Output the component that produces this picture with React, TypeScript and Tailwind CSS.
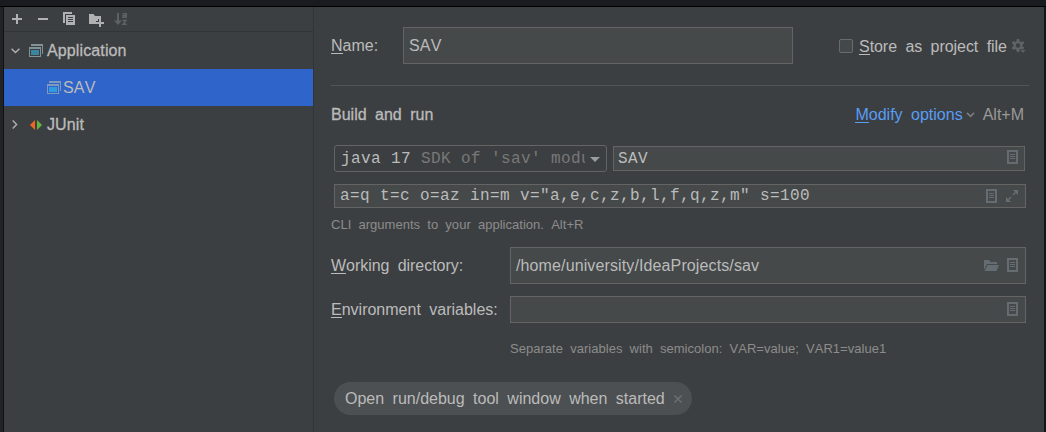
import React from "react";

const PageIcon = ({ className = "" }: { className?: string }) => (
  <svg className={`shrink-0 ${className}`} width="11" height="14" viewBox="0 0 11 14" shapeRendering="crispEdges">
    <path d="M0 0h11v14H0zM2 2v10h7V2z" fill="#656d73" fillRule="evenodd" />
    <path d="M3 4h5v1H3zM3 6h5v1H3zM3 8h5v1H3z" fill="#656d73" />
  </svg>
);

const AppIcon = ({ fill, frame, className = "" }: { fill: string; frame: string; className?: string }) => (
  <svg className={`shrink-0 ${className}`} width="14" height="13" viewBox="0 0 14 13" shapeRendering="crispEdges">
    <path d="M2 0h12v10h-1V2H2z" fill={frame} />
    <path d="M0 3h12v10H0zM1 5v7h10V5z" fill={frame} fillRule="evenodd" />
    <path d="M2 6h8v5H2z" fill={fill} />
  </svg>
);

const Label = ({ text, className = "" }: { text: string; className?: string }) => (
  <span className={`whitespace-nowrap ${className}`}>
    <span className="relative">
      {text[0]}
      <span className="absolute inset-x-0 bottom-0 h-px bg-current" />
    </span>
    {text.slice(1)}
  </span>
);

function Sidebar() {
  return (
    <aside className="flex w-[310px] shrink-0 flex-col border-r border-[#323537]">
      <div className="flex h-[25px] shrink-0 items-start border-b border-[#323537] pl-2 pt-[5px]">
        <svg width="120" height="15" viewBox="0 0 120 15">
          <path d="M4 2h2v4h4v2H6v4H4V8H0V6h4zM26 6h10v2H26z" fill="#afb1b3" />
          <path d="M51 0h9v2h-7v9h-2z" fill="#afb1b3" />
          <path d="M54 3h9v10h-9zM56 5v1h5V5zM56 7v1h5V7zM56 9v1h5V9z" fill="#afb1b3" fillRule="evenodd" />
          <path d="M77 2h4.500l1.500 2h6v3h-3v2h-2v3h-7z" fill="#afb1b3" />
          <path d="M87 7h2v3h3v2h-3v3h-2v-3h-3v-2h3z" fill="#afb1b3" />
          <path d="M105 1h2v7.500h3L106 13l-4-4.500h3z" fill="#5f6264" />
          <path d="M110.500 1.700h3.800v4.300M114 5.300h-3V3.600h3M110.500 8.500h3.500L110.900 12.300h3.900" stroke="#5f6264" strokeWidth="1.400" fill="none" />
        </svg>
      </div>
      <div className="flex h-[37px] items-center pl-[7px]">
        <svg width="9" height="6" viewBox="0 0 9 6" fill="none" stroke="#afb1b3" strokeWidth="1.400"><path d="M.6.7 4.500 4.600 8.400.7" /></svg>
        <AppIcon frame="#839199" fill="#3a859f" className="-mt-px ml-[9px]" />
        <span className="ml-1 tracking-[0.120px] [-webkit-text-stroke:0.3px_#bbbbbb]">Application</span>
      </div>
      <div className="flex h-[37px] items-center bg-[#2f65ca] pl-[43px]">
        <AppIcon frame="#8199bb" fill="#329bdb" className="-mt-px" />
        <span className="ml-[2px] tracking-[0.200px]">SAV</span>
      </div>
      <div className="flex h-[37px] items-center pl-[8px]">
        <svg width="6" height="9" viewBox="0 0 6 9" fill="none" stroke="#afb1b3" strokeWidth="1.400"><path d="M.7.6 4.600 4.500.7 8.400" /></svg>
        <svg className="ml-[12px]" width="12" height="10" viewBox="0 0 12 10"><path d="M5 0v10L0 5z" fill="#f26522" /><path d="M7 0v10l5-5z" fill="#62b543" /></svg>
        <span className="ml-[5px] tracking-[0.100px] [-webkit-text-stroke:0.3px_#bbbbbb]">JUnit</span>
      </div>
    </aside>
  );
}

export default function App() {
  return (
    <div className="flex h-[432px] w-[1046px] flex-col overflow-hidden bg-[#1a1b20] font-['Liberation_Sans',sans-serif] text-[16px] leading-[18px] text-[#bbbbbb] [font-kerning:none] [word-spacing:4px]">
      <div className="h-[7px] shrink-0 border-b border-black" />
      <div className="flex min-h-0 flex-1 border-l-[3px] border-[#222325]">
        <div className="flex flex-1 border-l border-r-2 border-l-[#0f1011] border-r-[#141516] bg-[#3c3f41]">
          <Sidebar />
          <main className="flex w-[716px] shrink-0 flex-col pl-[17px]">
            <div className="mt-5 flex h-[37px] items-center">
              <Label text="Name:" className="w-[72px]" />
              <div className="flex h-[37px] w-[390px] items-center border border-[#646464] bg-[#45494a] pl-[5px] tracking-[0.200px]">SAV</div>
              <span className="ml-[46px] size-[14px] rounded-[2px] border border-[#6b6b6b] bg-[#43494a]" />
              <Label text="Store as project file" className="ml-[6px] mt-[2px] tracking-[-0.050px]" />
              <svg className="ml-[5px] mt-px" width="14" height="14" viewBox="0 0 14 14">
                <circle cx="6" cy="6.500" r="3.400" fill="none" stroke="#606365" strokeWidth="2.400" />
                <path d="M6 0v3M6 10v3M.4 3.300 3 4.800M9 8.200l2.600 1.500M.4 9.700 3 8.200M9 4.800l2.600-1.500" stroke="#606365" strokeWidth="2.800" />
                <path d="M8 11H14L11 14z" fill="#606365" stroke="#3c3f41" strokeWidth=".4" />
              </svg>
            </div>
            <div className="mt-[21px] h-px w-[698px] bg-[#515557]" />
            <div className="mt-[19px] flex h-[19px] w-[693px] items-center">
              <span className="[-webkit-text-stroke:0.3px_#bbbbbb]">Build and run</span>
              <Label text="Modify options" className="ml-auto text-[#589df6]" />
              <svg className="ml-[3px]" width="9" height="6" viewBox="0 0 9 6" fill="none" stroke="#787b7d" strokeWidth="1.700"><path d="m1 .8 3.500 3.500L8 .8" /></svg>
              <span className="ml-[8px] text-[#999999]">Alt+M</span>
            </div>
            <div className="ml-[3px] mt-[21px] flex h-[27px] items-center font-['Liberation_Mono',monospace] text-[16px] tracking-[0.400px] [word-spacing:0px]">
              <div className="flex h-[27px] w-[273px] items-center rounded-[3px] border border-[#646464] pl-[6px]">
                <span className="w-[244px] overflow-hidden whitespace-pre">java 17 <span className="text-[#787878]">SDK of 'sav' modu</span></span>
                <svg className="ml-[5px] mt-[2px]" width="10" height="5" viewBox="0 0 10 5"><path d="M0 0h10L5 5z" fill="#9a9da0" /></svg>
              </div>
              <div className="ml-[6px] flex h-[25px] w-[412px] items-center justify-between border border-[#646464] bg-[#45494a] pl-1 pr-[6px]">
                SAV
                <PageIcon className="-mt-[3px]" />
              </div>
            </div>
            <div className="ml-[3px] mt-3 flex h-6 w-[692px] items-center border border-[#646464] bg-[#45494a] pl-[5px] pr-[7px] font-['Liberation_Mono',monospace] text-[16px] tracking-[0.400px] [word-spacing:0px]">
              <span className="mb-px whitespace-nowrap">a=q t=c o=az in=m v="a,e,c,z,b,l,f,q,z,m" s=100</span>
              <PageIcon className="ml-auto" />
              <svg className="ml-[9px]" width="12" height="12" viewBox="0 0 12 12" fill="#656d73">
                <path d="M7 0h5v5zM0 7l5 5H0z" />
                <path d="m9.500 2.500-2.500 2.500M5 7 2.500 9.500" stroke="#656d73" strokeWidth="1.500" />
              </svg>
            </div>
            <div className="mt-2 h-[18px] whitespace-nowrap text-[13px] text-[#8c8c8c] tracking-[0.030px] [word-spacing:3.500px]">CLI arguments to your application. Alt+R</div>
            <div className="mt-[13px] flex h-[37px] items-center">
              <Label text="Working directory:" className="w-[179px] tracking-[-0.050px]" />
              <div className="flex h-[37px] w-[516px] items-center border border-[#646464] bg-[#45494a] pl-[5px] pr-[7px]">
                <span className="tracking-[0.120px]">/home/university/IdeaProjects/sav</span>
                <svg className="ml-auto" width="15" height="12" viewBox="0 0 15 12" fill="#656d73">
                  <path d="M0 0h5l1.500 2H13v2H3L0 10zM3.500 5H15l-2.500 6H.5z" />
                </svg>
                <PageIcon className="-mt-px ml-2" />
              </div>
            </div>
            <div className="mt-3 flex h-[27px] items-center">
              <Label text="Environment variables:" className="w-[179px]" />
              <div className="flex h-[27px] w-[516px] items-center justify-end border border-[#646464] bg-[#45494a] pr-[7px]">
                <PageIcon className="-mt-px" />
              </div>
            </div>
            <div className="ml-[179px] mt-[17px] h-[18px] whitespace-nowrap text-[13px] text-[#8c8c8c] tracking-[0.030px] [word-spacing:3.500px]">Separate variables with semicolon: VAR=value; VAR1=value1</div>
            <div className="ml-[3px] mt-6 flex h-[33px] w-[358px] items-center rounded-full bg-[#4c5052] pl-[11px]">
              <span className="whitespace-nowrap">Open run/debug tool window when started</span>
              <svg className="ml-auto mr-[10px]" width="8" height="8" viewBox="0 0 8 8" stroke="#6e7274" strokeWidth="1.200"><path d="m.5.5 7 7m0-7-7 7" /></svg>
            </div>
          </main>
        </div>
      </div>
    </div>
  );
}
